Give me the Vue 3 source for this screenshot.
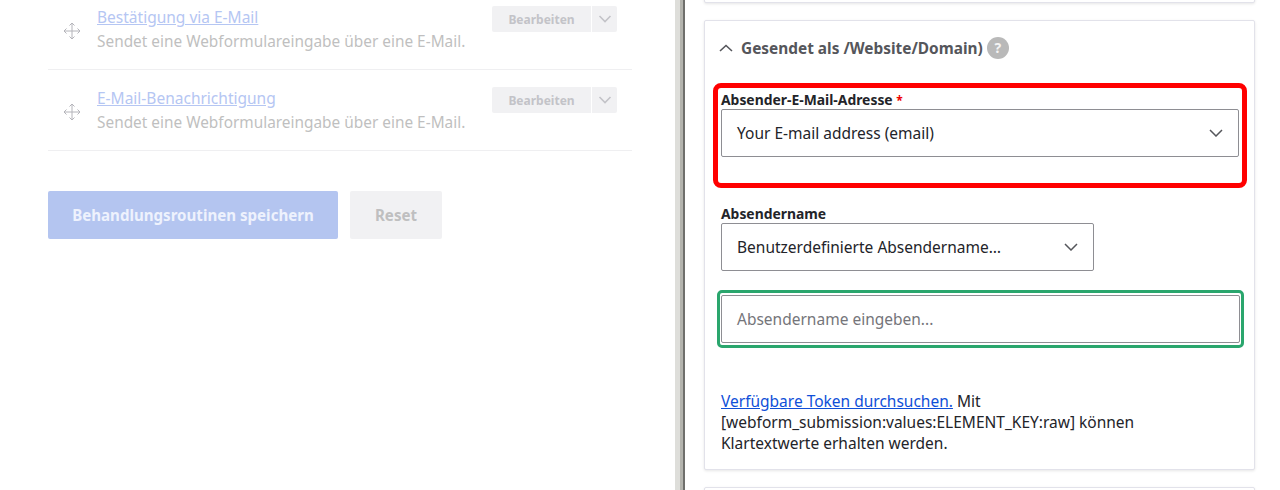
<template>
  <div class="page">
    <section class="handlers">
      <div class="rows">
        <div v-for="row in rows" :key="row" class="row">
          <svg class="move" width="18" height="18" viewBox="0 0 18 18" fill="none" stroke="#b4b4ba" stroke-width="1">
            <path d="M9 1v16M1 9h16M6.500 3.500 9 1l2.500 2.500M6.500 14.500 9 17l2.500-2.500M3.500 6.500 1 9l2.500 2.500M14.500 6.500 17 9l-2.500 2.500" />
          </svg>
          <div class="row-text">
            <a class="row-title">{{ row }}</a>
            <div class="row-desc">Sendet eine Webformulareingabe über eine E-Mail.</div>
          </div>
          <div class="split">
            <span class="split-main">Bearbeiten</span>
            <span class="split-caret">
              <svg width="14" height="8" viewBox="0 0 14 8" fill="none" stroke="#c3c3c8" stroke-width="1.6"><path d="M1.500 1 7 6.500 12.500 1" /></svg>
            </span>
          </div>
        </div>
      </div>
      <div class="actions">
        <button class="btn primary">Behandlungsroutinen speichern</button>
        <button class="btn plain">Reset</button>
      </div>
    </section>

    <div class="divider"></div>

    <aside class="side">
      <div class="card stub"></div>
      <div class="card">
        <div class="card-head">
          <svg width="14" height="8" viewBox="0 0 14 8" fill="none" stroke="#55565b" stroke-width="1.6"><path d="M1 7 7 1.500 13 7" /></svg>
          <span class="card-title">Gesendet als /Website/Domain)</span>
          <span class="help">?</span>
        </div>

        <div class="marked">
          <label class="label">Absender-E-Mail-Adresse <i>*</i></label>
          <div class="select wide">
            <span>Your E-mail address (email)</span>
            <svg width="14" height="8" viewBox="0 0 14 8" fill="none" stroke="#55565b" stroke-width="1.500"><path d="M1 1 7 7 13 1" /></svg>
          </div>
        </div>

        <div class="field">
          <label class="label">Absendername</label>
          <div class="select short">
            <span>Benutzerdefinierte Absendername…</span>
            <svg width="14" height="8" viewBox="0 0 14 8" fill="none" stroke="#55565b" stroke-width="1.500"><path d="M1 1 7 7 13 1" /></svg>
          </div>
        </div>

        <div class="focus-ring">
          <div class="input">Absendername eingeben...</div>
        </div>

        <p class="hint">
          <a>Verfügbare Token durchsuchen.</a> Mit<br />
          [webform_submission:values:ELEMENT_KEY:raw] können<br />
          Klartextwerte erhalten werden.
        </p>
      </div>
      <div class="card stub-bottom"></div>
    </aside>
  </div>
</template>

<script setup>
const rows = ["Bestätigung via E-Mail", "E-Mail-Benachrichtigung"];
</script>

<style>
html,
body {
  margin: 0;
  background: #fff;
  overflow: hidden;
}
</style>

<style scoped>
.page {
  display: flex;
  width: 1280px;
  height: 490px;
  overflow: hidden;
  font-family: "Noto Sans", "Open Sans", sans-serif;
  font-size: 15.5px;
  color: #232429;
}

.handlers {
  width: 584px;
  padding: 0 43px 0 48px;
  flex: none;
}

.rows {
  margin-top: -11px;
}

.row {
  display: flex;
  align-items: flex-start;
  height: 81px;
  box-sizing: border-box;
  padding: 0 15px;
  border-bottom: 1px solid #efeff1;
}

.move {
  margin-top: 33px;
  flex: none;
}

.row-text {
  margin-left: 16px;
  padding-top: 16px;
  flex: 1;
  line-height: 24px;
}

.row-title {
  color: #b5c6f3;
  text-decoration: underline;
  display: block;
  height: 24px;
}

.row-desc {
  margin-top: 1px;
  color: #bfbfc0;
  font-size: 15.4px;
}

.split {
  display: flex;
  height: 26px;
  margin-top: 17px;
  font-size: 12px;
  font-weight: 700;
  color: #c3c3c8;
}

.split-main {
  width: 99px;
  display: flex;
  align-items: center;
  justify-content: center;
  background: #f1f1f3;
  border-radius: 2px 0 0 2px;
  border-right: 1px solid #fff;
}

.split-caret {
  width: 25px;
  display: flex;
  align-items: center;
  justify-content: center;
  background: #f1f1f3;
  border-radius: 0 2px 2px 0;
}

.actions {
  display: flex;
  gap: 12px;
  margin-top: 40px;
}

.btn {
  height: 48px;
  border: 0;
  padding: 0;
  border-radius: 2px;
  font-family: inherit;
  font-size: 15.1px;
  font-weight: 700;
}

.primary {
  width: 290px;
  background: #b4c5f0;
  color: #eef2fd;
}

.plain {
  width: 92px;
  background: #f1f1f3;
  color: #bfbfc0;
}

.divider {
  flex: none;
  width: 11px;
  background: linear-gradient(to right, #dededa 0 5px, #b4b4ae 5px 8px, #6f6f6c 8px 10px, #fff 10px);
}

.side {
  flex: 1;
  padding: 0 25px 0 18px;
}

.card {
  background: #fff;
  border: 1px solid #e2e2ea;
  border-radius: 2px;
  box-shadow: 0 1px 3px rgba(0, 0, 0, 0.1);
  box-sizing: border-box;
}

.stub {
  height: 14px;
  margin-top: -11px;
  margin-bottom: 17px;
}

.stub-bottom {
  height: 30px;
  margin-top: 17px;
}

.card-head {
  display: flex;
  align-items: center;
  height: 54px;
  padding-left: 14px;
}

.card-title {
  margin-left: 8px;
  font-size: 15.4px;
  font-weight: 700;
  color: #55565b;
}

.help {
  width: 22px;
  height: 22px;
  margin-left: 4px;
  border-radius: 50%;
  background: #b9b9b9;
  color: #f4f4f4;
  font-size: 14px;
  font-weight: 700;
  text-align: center;
  line-height: 22px;
}

.marked {
  margin: 8px 7px 0 8px;
  height: 105px;
  box-sizing: border-box;
  border: 5px solid #f00;
  border-radius: 8px;
  padding: 3px 3px 0;
}

.label {
  display: block;
  font-size: 13.9px;
  font-weight: 700;
  line-height: 17px;
  color: #232429;
}

.field .label {
  margin-bottom: 1px;
}

.label i {
  color: #e00;
  font-style: normal;
  font-size: 12px;
}

.select {
  display: flex;
  align-items: center;
  justify-content: space-between;
  height: 48px;
  box-sizing: border-box;
  padding: 0 15px;
  border: 1px solid #8e8e93;
  border-radius: 2px;
}

.wide {
  width: 518px;
}

.short {
  width: 373px;
}

.field {
  margin: 17px 0 0 16px;
}

.focus-ring {
  margin: 19px 0 0 12px;
  width: 527px;
  height: 58px;
  box-sizing: border-box;
  border: 3px solid #2aa66d;
  border-radius: 5px;
  padding: 2px 1px;
}

.input {
  height: 48px;
  box-sizing: border-box;
  padding: 0 15px;
  line-height: 46px;
  border: 1px solid #8e8e93;
  border-radius: 2px;
  color: #75757a;
}

.hint {
  margin: 43px 0 0 16px;
  line-height: 21px;
  height: 78px;
  color: #232429;
}

.hint a {
  color: #0f4fd8;
  text-decoration: underline;
}
</style>
